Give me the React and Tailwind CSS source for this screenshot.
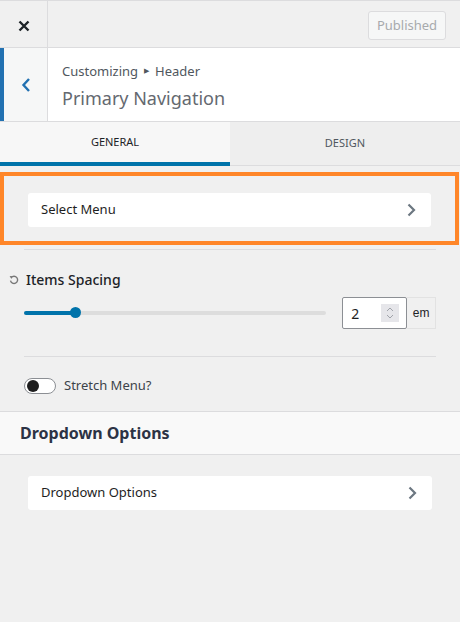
import React from "react";

const Chevron = () => (
  <svg width="10" height="14" viewBox="0 0 10 14" className="shrink-0">
    <path d="M2.5 1.5 L8 7 L2.5 12.5" fill="none" stroke="#6c7781" strokeWidth="2.2" />
  </svg>
);

const Card = ({ label }) => (
  <div className="flex h-[34px] items-center justify-between rounded-[3px] bg-white pl-[13px] pr-[15px]">
    <span className="text-[13px] text-[#1e1e1e]">{label}</span>
    <Chevron />
  </div>
);

export default function App() {
  return (
    <div
      className="flex h-[622px] w-[460px] flex-col bg-[#f0f0f0]"
      style={{ fontFamily: '"Noto Sans", "Open Sans", sans-serif' }}
    >
      {/* top bar */}
      <div className="flex h-[48px] border-t border-b border-[#dcdcde] bg-[#f0f0f0]">
        <div className="flex w-[48px] items-center justify-center border-r border-[#dcdcde] pt-[3px]">
          <svg width="12" height="12" viewBox="0 0 12 12">
            <path d="M1.5 1.5 L10.5 10.5 M10.5 1.5 L1.5 10.5" stroke="#1d2327" strokeWidth="2.4" />
          </svg>
        </div>
        <div className="flex flex-1 items-start justify-end pr-[14px] pt-[10px]">
          <div className="flex h-[29px] w-[78px] items-center justify-center rounded-[3px] border border-[#dcdcde] bg-[#f6f7f7] text-[13px] text-[#a7aaad]">
            Published
          </div>
        </div>
      </div>

      {/* header */}
      <div className="flex h-[74px] border-b border-[#dcdcde] bg-white">
        <div className="flex w-[48px] items-center justify-center border-l-4 border-r border-l-[#2271b1] border-r-[#dcdcde] bg-[#f6f7f7]">
          <svg width="10" height="16" viewBox="0 0 10 16">
            <path d="M8 2 L2.5 8 L8 14" fill="none" stroke="#2271b1" strokeWidth="2.4" />
          </svg>
        </div>
        <div className="flex flex-col justify-center pl-[14px] pt-[2px]">
          <div className="flex items-center text-[13px] leading-[18px] text-[#50575e]">
            Customizing
            <span className="mx-[6px] text-[7px] text-[#50575e]">▶</span>
            Header
          </div>
          <div className="mt-[6px] text-[18px] leading-[24px] text-[#646970]">Primary Navigation</div>
        </div>
      </div>

      {/* tabs */}
      <div className="flex h-[44px]">
        <div className="flex w-[230px] items-center justify-center border-b-4 border-[#0073aa] bg-[#f7f7f7] pt-[1px] text-[11px] text-[#1d2327]">
          GENERAL
        </div>
        <div className="flex flex-1 items-center justify-center border-b border-[#dcdcde] bg-[#eeeeee] text-[11px] text-[#50575e]">
          DESIGN
        </div>
      </div>

      {/* select menu (highlighted) */}
      <div className="mt-[6px] mr-[1px] border-4 border-[#ff8629] px-[24px] pt-[17px] pb-[14px]">
        <Card label="Select Menu" />
      </div>

      <div className="mx-[24px] mt-[4px] border-t border-[#dcdcde]" />

      {/* items spacing */}
      <div className="flex items-center pl-[9px] pt-[19px]">
        <svg width="10" height="10" viewBox="0 0 10 10" className="mr-[7px]">
          <path d="M2.2 2.6 A3.6 3.6 0 1 1 1.5 5.6" fill="none" stroke="#777" strokeWidth="1.4" />
          <path d="M0.6 1 L3.6 1.2 L2.4 4" fill="#777" />
        </svg>
        <span className="text-[14px] font-medium text-[#1d2327]">Items Spacing</span>
      </div>
      <div className="flex items-center pl-[24px] pr-[24px] pt-[7px]">
        <div className="relative h-[4px] w-[303px] rounded-full bg-[#dddddd]">
          <div className="absolute left-0 top-0 h-[4px] w-[51px] rounded-full bg-[#0073aa]" />
          <div className="absolute left-[46px] top-[-4px] h-[11px] w-[11px] rounded-full bg-[#0073aa]" />
        </div>
        <div className="ml-[16px] flex h-[32px] w-[65px] items-center justify-between rounded-[2px] border border-[#8c8f94] bg-white pl-[8px] pr-[7px]">
          <span className="text-[14px] text-[#1e1e1e]">2</span>
          <div className="flex h-[18px] w-[18px] flex-col items-center justify-center bg-[#e6e6ea]">
            <svg width="8" height="14" viewBox="0 0 8 14">
              <path d="M1 5 L4 2 L7 5 M1 9 L4 12 L7 9" fill="none" stroke="#a0a3aa" strokeWidth="1" />
            </svg>
          </div>
        </div>
        <div className="flex h-[32px] w-[29px] items-center justify-center border border-l-0 border-[#e2e2e2] text-[12px] font-medium text-[#1d2327]" style={{ fontFamily: '"Liberation Sans", Arial, sans-serif' }}>
          em
        </div>
      </div>

      <div className="mx-[24px] mt-[27px] border-t border-[#dcdcde]" />

      {/* stretch menu */}
      <div className="flex items-center pl-[24px] pt-[19px]">
        <div className="flex h-[16px] w-[32px] items-center rounded-full border border-[#8c8f94] bg-white pl-[2px]">
          <div className="h-[12px] w-[12px] rounded-full bg-[#1e1e1e]" />
        </div>
        <span className="ml-[8px] text-[13px] text-[#3c434a]">Stretch Menu?</span>
      </div>

      {/* dropdown options heading */}
      <div className="mt-[15px] flex h-[44px] items-center border-t border-b border-[#dcdcde] bg-[#f9f9f9] pl-[20px]">
        <span className="text-[16px] font-bold text-[#2c3345]">Dropdown Options</span>
      </div>

      <div className="px-[28px] pt-[21px]">
        <Card label="Dropdown Options" />
      </div>
    </div>
  );
}
